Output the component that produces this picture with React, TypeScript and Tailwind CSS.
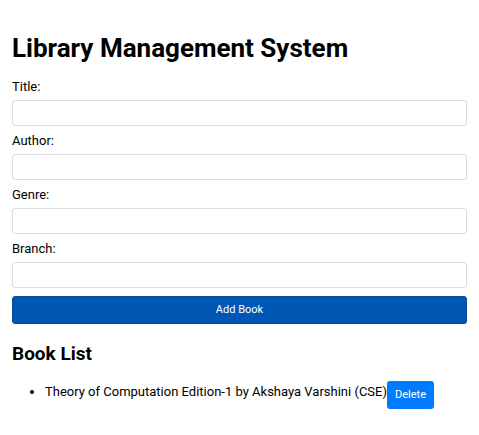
import { useState } from "react";

interface Book {
  title: string;
  author: string;
  genre: string;
  branch: string;
}

const fields = ["Title", "Author", "Genre", "Branch"];

export default function App() {
  const [books] = useState<Book[]>([
    {
      title: "Theory of Computation Edition-1",
      author: "Akshaya Varshini",
      genre: "",
      branch: "CSE",
    },
  ]);

  return (
    <div className="min-h-[435px] bg-white px-3 pt-[33px] font-['Roboto',sans-serif] text-black">
      <h1 className="text-[26px] font-bold leading-[30px]">Library Management System</h1>

      <form className="mt-[16px]" onSubmit={(e) => e.preventDefault()}>
        {fields.map((f) => (
          <div key={f} className="mb-[7px]">
            <label className="block text-[13px] leading-[16px]">{f}:</label>
            <input
              type="text"
              className="mt-[5px] block h-[26px] w-full rounded-[3px] border border-[#dcdcdc] bg-white px-2 text-[13px]"
            />
          </div>
        ))}
        <button
          type="submit"
          className="mt-[1px] h-[28px] w-full rounded-[3px] border border-[#0b4a94] bg-[#0056b3] text-[11px] text-white"
        >
          Add Book
        </button>
      </form>

      <h2 className="mt-[19px] text-[19px] font-bold leading-[22px]">Book List</h2>
      <ul className="mt-[16px] list-disc pl-[33px] text-[13px]">
        {books.map((b, i) => (
          <li key={i}>
            {b.title} by {b.author} ({b.branch})
            <button className="h-[28px] rounded-[3px] bg-[#007bff] px-[8px] align-[-2px] text-[11px] text-white">
              Delete
            </button>
          </li>
        ))}
      </ul>
    </div>
  );
}
